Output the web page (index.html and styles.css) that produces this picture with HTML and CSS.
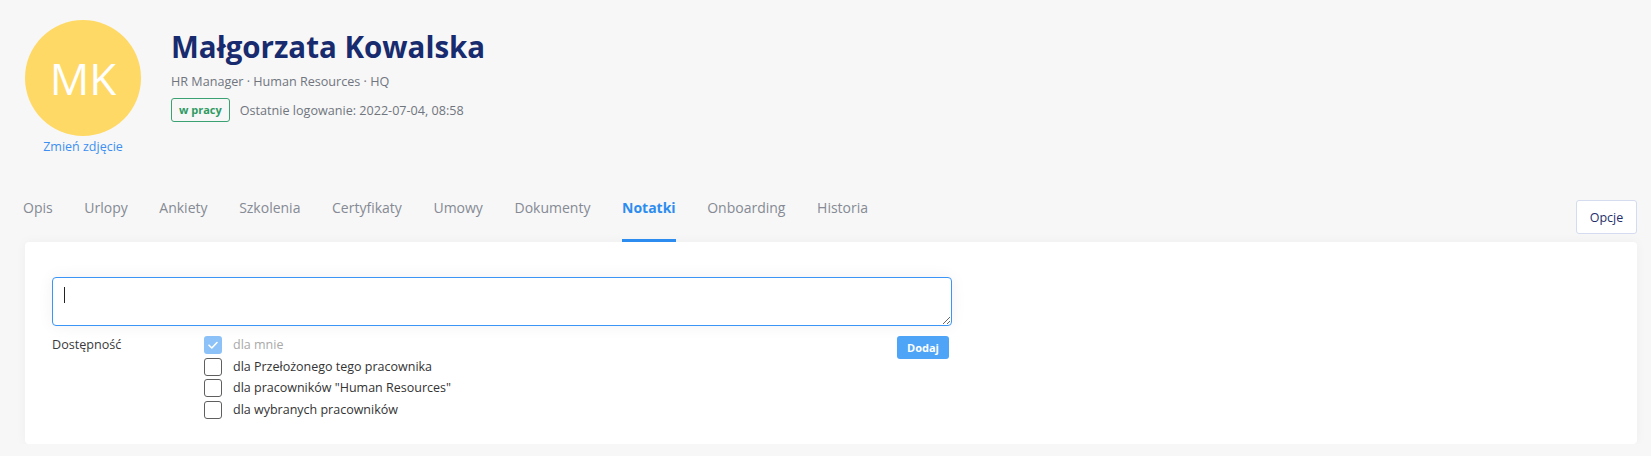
FILE: index.html
```html
<!DOCTYPE html>
<html lang="pl">
  <head>
    <meta charset="UTF-8" />
    <meta name="viewport" content="width=device-width, initial-scale=1.0" />
    <title>Małgorzata Kowalska - Notatki</title>
    <link rel="stylesheet" href="styles.css">
  </head>
  <body>
    <div class="page">
      <!-- Profile header -->
      <header class="profile">
        <div class="avatar-col">
          <div class="avatar">MK</div>
          <a href="#" class="change-photo">Zmień zdjęcie</a>
        </div>
        <div class="profile-info">
          <h1 class="name">Małgorzata Kowalska</h1>
          <p class="meta">HR Manager · Human Resources · HQ</p>
          <div class="status-row">
            <span class="badge">w pracy</span>
            <span class="last-login">Ostatnie logowanie: 2022-07-04, 08:58</span>
          </div>
        </div>
      </header>

      <!-- Tabs -->
      <nav class="tabs-bar">
        <ul class="tabs">
          <li class="tab">Opis</li>
          <li class="tab">Urlopy</li>
          <li class="tab">Ankiety</li>
          <li class="tab">Szkolenia</li>
          <li class="tab">Certyfikaty</li>
          <li class="tab">Umowy</li>
          <li class="tab">Dokumenty</li>
          <li class="tab active">Notatki</li>
          <li class="tab">Onboarding</li>
          <li class="tab">Historia</li>
        </ul>
        <button class="btn-options">Opcje</button>
      </nav>

      <!-- Notes card -->
      <section class="card">
        <form class="note-form">
          <div class="note-input">
            <textarea class="note-text"></textarea>
            <span class="caret"></span>
          </div>
          <div class="access-row">
            <span class="access-label">Dostępność</span>
            <div class="access-options">
              <label class="option disabled">
                <span class="box checked">
                  <svg viewBox="0 0 18 18"><path d="M5 9.2l2.8 2.8L13 6.5" /></svg>
                </span>
                dla mnie
              </label>
              <label class="option"><span class="box"></span>dla Przełożonego tego pracownika</label>
              <label class="option"><span class="box"></span>dla pracowników "Human Resources"</label>
              <label class="option"><span class="box"></span>dla wybranych pracowników</label>
            </div>
            <button type="button" class="btn-add">Dodaj</button>
          </div>
        </form>
      </section>
    </div>
  </body>
</html>
```

FILE: styles.css
```css
body {
  margin: 0;
  padding: 0;
  background-color: #f7f7f7;
  font-family: "Open Sans", "Liberation Sans", sans-serif;
  color: #333;
  overflow: hidden;
}

.page {
  padding: 20px 14px 0 25px;
}

/* Profile header */
.profile {
  display: flex;
  gap: 30px;
}

.avatar-col {
  width: 116px;
  display: flex;
  flex-direction: column;
  align-items: center;
}

.avatar {
  width: 116px;
  height: 116px;
  border-radius: 50%;
  background-color: #ffd966;
  color: #fff;
  font-size: 44px;
  display: flex;
  align-items: center;
  justify-content: center;
}

.change-photo {
  margin-top: 2px;
  font-size: 12.5px;
  line-height: 18px;
  color: #3d8ff2;
  text-decoration: none;
  white-space: nowrap;
}

.profile-info {
  padding-top: 9px;
}

.name {
  margin: 0;
  font-size: 29.5px;
  line-height: 36px;
  font-weight: 700;
  color: #172b6e;
}

.meta {
  margin: 8px 0 0;
  font-size: 12.6px;
  line-height: 18px;
  color: #70757e;
}

.status-row {
  margin-top: 7px;
  display: flex;
  align-items: center;
  gap: 10px;
}

.badge {
  box-sizing: border-box;
  height: 24px;
  padding: 0 7px;
  border: 1px solid #3ba172;
  border-radius: 3px;
  font-size: 11px;
  font-weight: 700;
  line-height: 22px;
  color: #2f9a62;
}

.last-login {
  font-size: 12.6px;
  color: #70757e;
}

/* Tabs */
.tabs-bar {
  margin-top: 30px;
  display: flex;
  justify-content: space-between;
}

.tabs {
  list-style: none;
  margin: 0 0 0 -2px;
  padding: 0;
  display: flex;
  gap: 31.6px;
}

.tab {
  padding: 12px 0 21px;
  font-size: 14px;
  line-height: 20px;
  color: #858a94;
  border-bottom: 3px solid transparent;
}

.tab.active {
  font-weight: 700;
  color: #2d8cf0;
  border-bottom-color: #2d8cf0;
}

.btn-options {
  align-self: flex-end;
  margin-bottom: 8px;
  width: 61px;
  height: 34px;
  background: #fff;
  border: 1px solid #d5dcef;
  border-radius: 3px;
  font-family: inherit;
  font-size: 12.5px;
  color: #1f2d6b;
}

/* Card */
.card {
  background: #fff;
  border-radius: 4px;
  box-shadow: 0 0 12px rgba(0, 0, 0, 0.04);
  padding: 35px 27px 25px;
  height: 142px;
}

.note-form {
  width: 900px;
}

.note-input {
  position: relative;
}

.note-text {
  display: block;
  box-sizing: border-box;
  width: 900px;
  height: 49px;
  border: 1px solid #3a95f7;
  border-radius: 4px;
  box-shadow: 0 0 16px rgba(30, 40, 90, 0.06);
  outline: none;
  resize: vertical;
  font-family: inherit;
}

.caret {
  position: absolute;
  left: 12px;
  top: 10px;
  width: 1px;
  height: 16px;
  background: #222;
}

.access-row {
  margin-top: 10px;
  display: flex;
  align-items: flex-start;
}

.access-label {
  width: 152px;
  font-size: 12.6px;
  line-height: 18px;
  color: #3a3a3a;
}

.access-options {
  flex: 1;
  display: flex;
  flex-direction: column;
  gap: 3.7px;
}

.option {
  display: flex;
  align-items: center;
  gap: 11px;
  font-size: 12.5px;
  line-height: 18px;
  color: #333;
}

.option.disabled {
  color: #a9a9a9;
}

.box {
  box-sizing: border-box;
  width: 18px;
  height: 18px;
  border: 1px solid #5f5f5f;
  border-radius: 3px;
  background: #fff;
}

.box.checked {
  border: none;
  background: #8cc2f8;
}

.box svg {
  display: block;
  width: 18px;
  height: 18px;
  fill: none;
  stroke: #fff;
  stroke-width: 1.6;
  stroke-linecap: round;
  stroke-linejoin: round;
}

.btn-add {
  margin-right: 3px;
  width: 52px;
  height: 23px;
  border: none;
  border-radius: 3px;
  background: #4ea4f6;
  color: #fff;
  font-family: inherit;
  font-size: 11px;
  font-weight: 700;
  padding: 0;
}
```
